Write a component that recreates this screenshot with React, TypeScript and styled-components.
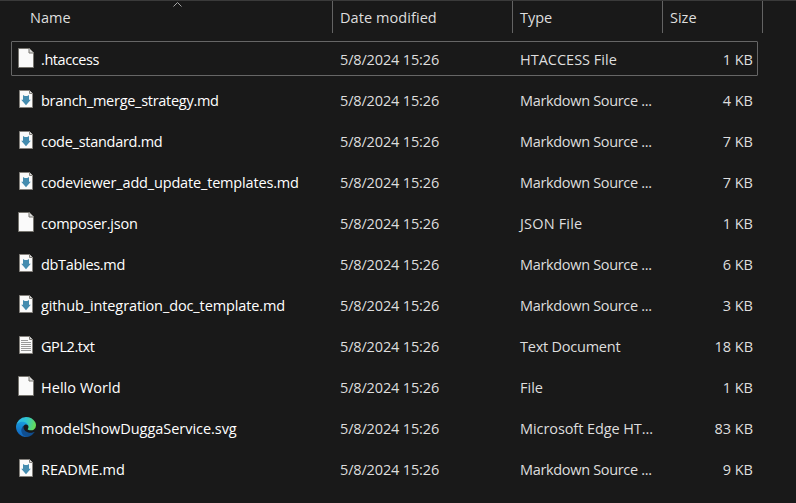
import React from "react";
import styled, { createGlobalStyle } from "styled-components";

const GlobalStyle = createGlobalStyle`
  * { box-sizing: border-box; }
  body { margin: 0; background: #191919; }
`;

const Window = styled.main`
  width: 796px;
  height: 503px;
  overflow: hidden;
  background: #191919;
  border-top: 1px solid #3a3a3a;
  font-family: "Open Sans", "Noto Sans", sans-serif;
  font-size: 14.5px;
  line-height: 20px;
  color: #dedede;
`;

const Header = styled.header`
  position: relative;
  display: grid;
  grid-template-columns: 333px 180px 150px 100px;
  height: 32px;
`;

const HeaderCell = styled.div<{ $indent?: number; $spacing?: number }>`
  padding: 7px 0 0 ${(p) => p.$indent ?? 7}px;
  border-right: 1px solid #636363;
  letter-spacing: ${(p) => p.$spacing ?? 0}px;
`;

const SortArrow = styled.svg`
  position: absolute;
  left: 172px;
  top: 0;
`;

const List = styled.div`
  display: flex;
  flex-direction: column;
  gap: 6px;
  padding: 8px 0 0 11px;
`;

const Row = styled.div<{ $focused?: boolean }>`
  display: grid;
  grid-template-columns: 328px 180px 140px 93px;
  align-items: center;
  width: 747px;
  height: 35px;
  border: 1px solid ${(p) => (p.$focused ? "#666" : "transparent")};
  border-radius: 1px;
`;

const NameCell = styled.div`
  display: flex;
  align-items: center;
  height: 33px;
  color: #fff;
`;

const IconSlot = styled.span`
  display: flex;
  align-self: flex-start;
  width: 22px;
  height: 22px;
  margin: 5px 4px 0 3px;
`;

const Text = styled.span<{ $spacing?: number }>`
  padding-top: 2px;
  white-space: nowrap;
  letter-spacing: ${(p) => p.$spacing ?? 0}px;
`;

const SizeCell = styled.div`
  padding-top: 2px;
  text-align: right;
`;

type Kind = "blank" | "markdown" | "text" | "edge";

function FileIcon({ kind }: { kind: Kind }) {
  if (kind === "edge") {
    return (
      <svg width="22" height="22" viewBox="-12.800 -12.800 281.600 281.600">
        <defs>
          <linearGradient id="edgeTop" x1="0" y1="0.3" x2="1" y2="0.5">
            <stop offset="0" stopColor="#2fb4ee" />
            <stop offset="0.5" stopColor="#2fc5cf" />
            <stop offset="1" stopColor="#68dd52" />
          </linearGradient>
          <linearGradient id="edgeLeft" x1="0.6" y1="0.1" x2="0.4" y2="1">
            <stop offset="0" stopColor="#189bdd" />
            <stop offset="1" stopColor="#1162bd" />
          </linearGradient>
        </defs>
        <path fill="#104e8f" d="M231 190.500c-3.400 1.800-6.900 3.400-10.500 4.700a101.700 101.700 0 0 1-35.900 6.400c-47.300 0-88.500-32.500-88.500-74.300 0-11.400 6.400-21.900 16.400-27.300-42.800 1.800-53.800 46.400-53.800 72.500 0 73.900 68.100 81.400 82.800 81.400 7.900 0 19.800-2.300 27-4.600l1.300-.4a128.300 128.300 0 0 0 66.600-52.800 4 4 0 0 0-5.400-5.600z" />
        <path fill="url(#edgeLeft)" d="M105.700 241.400a79.200 79.200 0 0 1-22.700-21.300 80.700 80.700 0 0 1 29.500-120c3.200-1.500 8.500-4.100 15.600-4a32.400 32.400 0 0 1 25.700 13 31.900 31.900 0 0 1 6.300 18.700c0-.2 24.500-79.600-80-79.600-43.900 0-80 41.700-80 78.200a130.200 130.200 0 0 0 12.100 56 128 128 0 0 0 156.400 67 75.500 75.500 0 0 1-62.800-8z" />
        <path fill="url(#edgeTop)" d="M152.300 148.900c-.9 1-3.400 2.500-3.400 5.600 0 2.600 1.700 5.200 4.800 7.300 14.300 10 41.400 8.600 41.500 8.600a59.600 59.600 0 0 0 30.300-8.300 61.400 61.400 0 0 0 30.400-52.900c.3-22.400-8-37.300-11.300-43.900C223.500 23.900 177.700 0 128 0A128 128 0 0 0 0 126.200c.5-36.500 36.800-66 80-66 3.500 0 23.500.3 42 10.100 16.300 8.600 24.900 18.900 30.800 29.200 6.200 10.700 7.300 24.100 7.300 29.500s-2.700 13.300-7.800 19.900z" />
      </svg>
    );
  }
  if (kind === "blank") {
    return (
      <svg width="22" height="22" viewBox="0 0 22 22">
        <path d="M3.5 1.5h11l4 4v15h-15z" fill="#fafafa" stroke="#77756f" />
        <path d="M14 1.5v4.500h4.500" fill="#d8d8d8" stroke="#77756f" />
      </svg>
    );
  }
  return (
    <svg width="22" height="22" viewBox="0 0 22 22">
      <path d="M4.5 2.5h10l3 3v14h-13z" fill="#fafafa" stroke="#85827d" />
      <path d="M14.5 2.5v3h3" fill="#ddd" stroke="#85827d" />
      {kind === "markdown" ? (
        <path d="M8 7l1.700 1h2.600L14 7v4.700h1.800L11 17.200l-4.800-5.500H8z" fill="#448caf" />
      ) : (
        <path d="M6 6.500h7M6 8.500h10M6 10.500h10M6 12.500h10M6 14.500h10M6 16.500h10" stroke="#999" />
      )}
    </svg>
  );
}

interface FileEntry {
  name: string;
  type: string;
  size: string;
  kind: Kind;
  nameSpacing?: number;
  typeSpacing?: number;
}

const MD = { type: "Markdown Source ...", typeSpacing: -0.33, kind: "markdown" as Kind };

const files: FileEntry[] = [
  { name: ".htaccess", nameSpacing: -0.42, type: "HTACCESS File", size: "1 KB", kind: "blank" },
  { name: "branch_merge_strategy.md", nameSpacing: -0.28, size: "4 KB", ...MD },
  { name: "code_standard.md", nameSpacing: -0.28, size: "7 KB", ...MD },
  { name: "codeviewer_add_update_templates.md", nameSpacing: -0.17, size: "7 KB", ...MD },
  { name: "composer.json", nameSpacing: -0.24, type: "JSON File", typeSpacing: 0.18, size: "1 KB", kind: "blank" },
  { name: "dbTables.md", nameSpacing: -0.32, size: "6 KB", ...MD },
  { name: "github_integration_doc_template.md", nameSpacing: -0.11, size: "3 KB", ...MD },
  { name: "GPL2.txt", nameSpacing: -0.42, type: "Text Document", typeSpacing: -0.23, size: "18 KB", kind: "text" },
  { name: "Hello World", nameSpacing: 0.04, type: "File", size: "1 KB", kind: "blank" },
  { name: "modelShowDuggaService.svg", nameSpacing: -0.04, type: "Microsoft Edge HT...", typeSpacing: -0.08, size: "83 KB", kind: "edge" },
  { name: "README.md", size: "9 KB", ...MD },
];

export default function App() {
  return (
    <>
      <GlobalStyle />
      <Window>
        <Header>
          <HeaderCell $indent={30}>Name</HeaderCell>
          <HeaderCell $spacing={0.07}>Date modified</HeaderCell>
          <HeaderCell>Type</HeaderCell>
          <HeaderCell>Size</HeaderCell>
          <SortArrow width="11" height="7" viewBox="0 0 11 7">
            <path d="M1.500 5.500l4-4 4 4" fill="none" stroke="#a5a5a5" />
          </SortArrow>
        </Header>
        <List>
          {files.map((file, index) => (
            <Row key={file.name} $focused={index === 0}>
              <NameCell>
                <IconSlot>
                  <FileIcon kind={file.kind} />
                </IconSlot>
                <Text $spacing={file.nameSpacing}>{file.name}</Text>
              </NameCell>
              <Text $spacing={-0.15}>5/8/2024 15:26</Text>
              <Text $spacing={file.typeSpacing}>{file.type}</Text>
              <SizeCell>{file.size}</SizeCell>
            </Row>
          ))}
        </List>
      </Window>
    </>
  );
}
